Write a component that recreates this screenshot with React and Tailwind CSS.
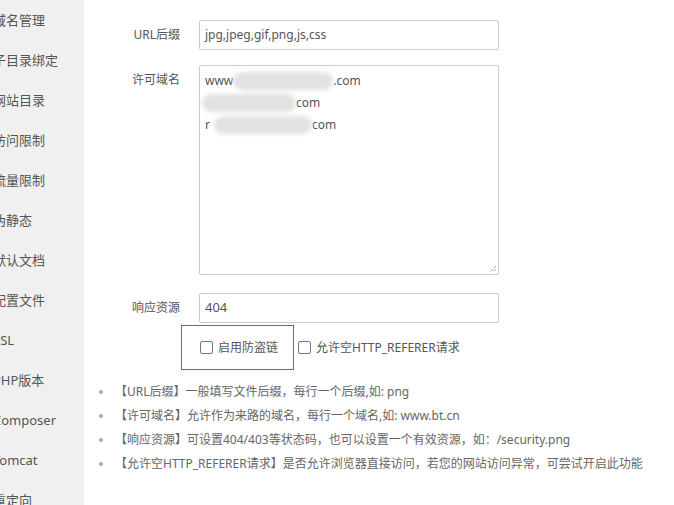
import React from "react";

const sideItems = ["域名管理","子目录绑定","网站目录","访问限制","流量限制","伪静态","默认文档","配置文件","SSL","PHP版本","Composer","Tomcat","重定向"];

function Blur({ w, ml = 0 }) {
  return (
    <span
      className="inline-block h-[18px] align-middle bg-[#e2e2e2] rounded-[9px] blur-[2px]"
      style={{ width: w, marginLeft: ml }}
    />
  );
}

function Box() {
  return <span className="inline-block w-[13px] h-[13px] border border-[#767676] rounded-[2px] bg-white" />;
}

export default function App() {
  const font = { fontFamily: '"Noto Sans","Noto Sans CJK SC",sans-serif' };
  return (
    <div className="flex w-[674px] h-[505px] overflow-hidden bg-white text-[12px] text-[#555]" style={font}>
      <div className="w-[84px] shrink-0 bg-[#f0f0f0] overflow-hidden pt-[1px]">
        {sideItems.map((t) => (
          <div key={t} className="h-10 flex items-center whitespace-nowrap text-[13px] text-[#555] -ml-[7px]">{t}</div>
        ))}
      </div>
      <div className="flex-1 pt-5">
        <div className="flex items-center h-[30px]">
          <div className="w-[96px] text-right">URL后缀</div>
          <div className="ml-[19px] w-[300px] h-[30px] border border-[#ccc] rounded-[2px] flex items-center px-[5px] text-[#555]">jpg,jpeg,gif,png,js,css</div>
        </div>
        <div className="flex mt-[15px]">
          <div className="w-[96px] text-right h-[30px] flex items-center justify-end">许可域名</div>
          <div className="ml-[19px] w-[300px] h-[210px] border border-[#ccc] rounded-[2px] relative px-[5px] pt-[4px] text-[#555]">
            <div className="h-[22px] flex items-center whitespace-nowrap">www<Blur w={100} />.com</div>
            <div className="h-[22px] flex items-center whitespace-nowrap -ml-[3px]"><Blur w={94} />com</div>
            <div className="h-[22px] flex items-center whitespace-nowrap">r<Blur w={98} ml={4} />com</div>
            <svg className="absolute right-[1px] bottom-[1px]" width="9" height="9" viewBox="0 0 9 9">
              <path d="M8 2L2 8M8 5L5 8" stroke="#777" strokeWidth="1" strokeDasharray="1 1" />
            </svg>
          </div>
        </div>
        <div className="flex items-center mt-[18px]">
          <div className="w-[96px] text-right">响应资源</div>
          <div className="ml-[19px] w-[300px] h-[30px] border border-[#ccc] rounded-[2px] flex items-center px-[5px] text-[13px] text-[#555]">404</div>
        </div>
        <div className="flex items-center mt-[2px] ml-[97px]">
          <div className="w-[113px] h-[45px] border border-[#e53935] flex items-center pl-[18px] gap-[4px]">
            <Box /><span className="text-[#555] ml-[1px]">启用防盗链</span>
          </div>
          <div className="flex items-center ml-[4px] gap-[5px]">
            <Box /><span>允许空HTTP_REFERER请求</span>
          </div>
        </div>
        <ul className="mt-[10px] ml-[15px] text-[#666]">
          {[
            "【URL后缀】一般填写文件后缀，每行一个后缀,如: png",
            "【许可域名】允许作为来路的域名，每行一个域名,如: www.bt.cn",
            "【响应资源】可设置404/403等状态码，也可以设置一个有效资源，如：/security.png",
            "【允许空HTTP_REFERER请求】是否允许浏览器直接访问，若您的网站访问异常，可尝试开启此功能",
          ].map((t) => (
            <li key={t} className="h-6 flex items-center whitespace-nowrap">
              <span className="w-[4px] h-[4px] rounded-full bg-[#aaa] mr-[14px]" />
              <span className="-ml-[2px]">{t}</span>
            </li>
          ))}
        </ul>
      </div>
    </div>
  );
}
